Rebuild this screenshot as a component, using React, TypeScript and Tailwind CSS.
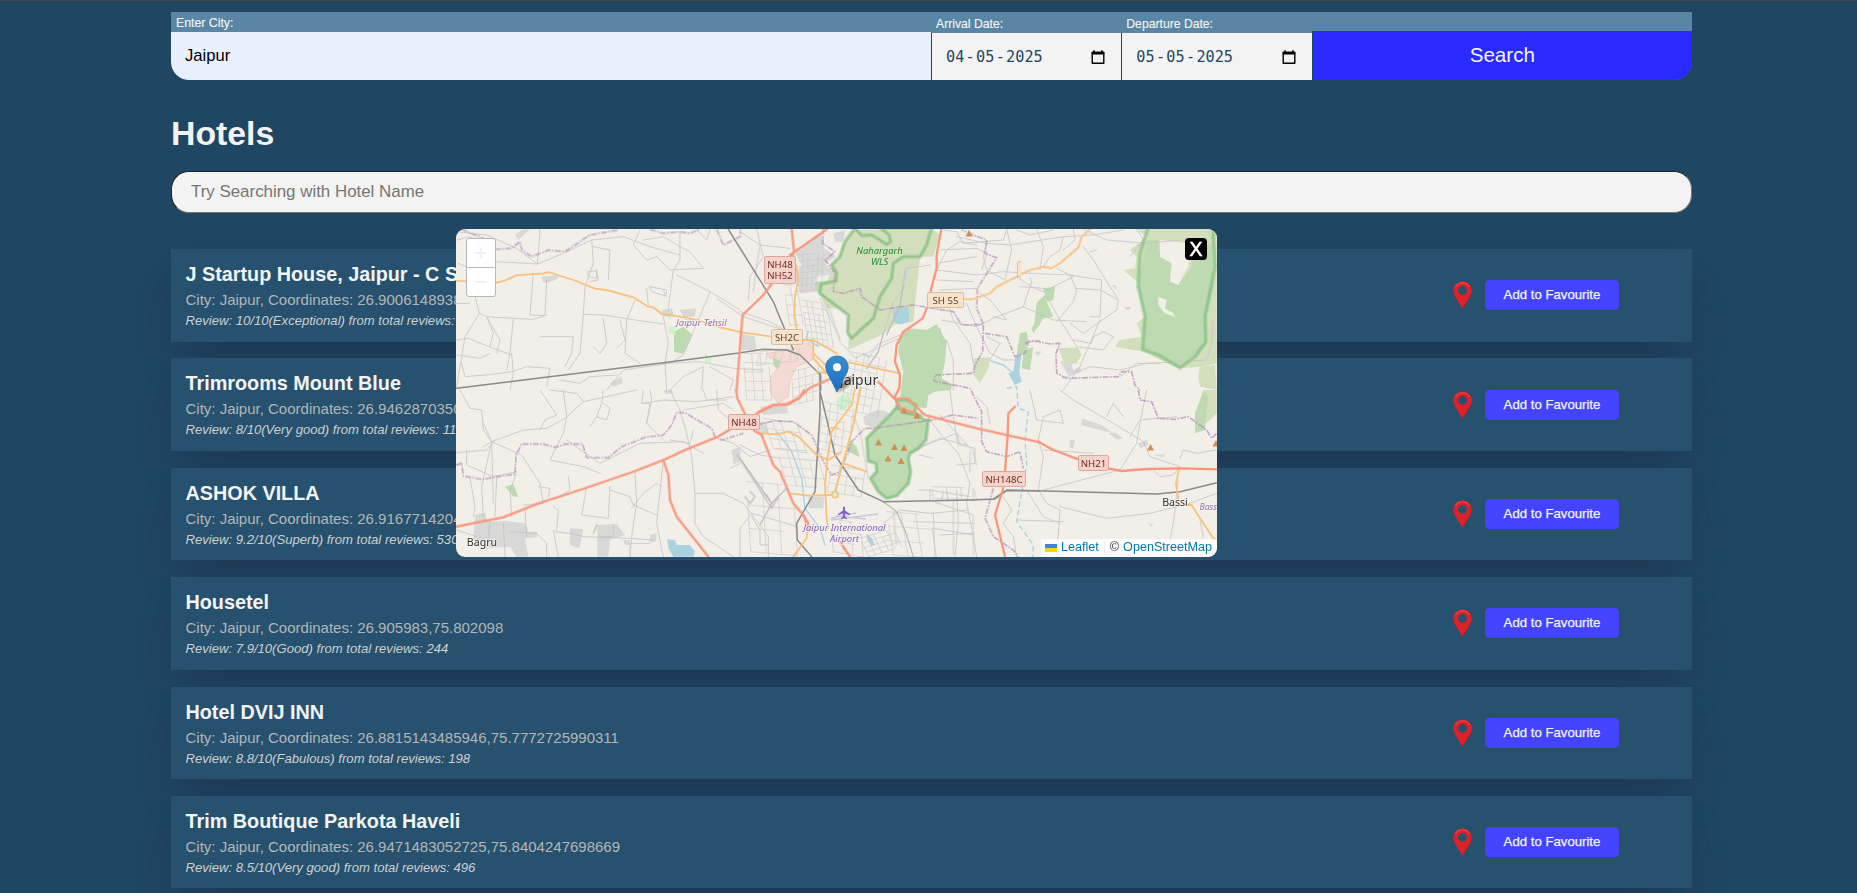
import React from "react";

type Frame = "A" | "B" | "C" | "D" | "E";
type Seg = [Frame, string];

/* Map geometry is kept in five survey sheets at 3x scale, each with its own origin. */
const SHEETS: Record<Frame, string> = {
  A: "translate(-6 -9) scale(.33333)",
  B: "translate(-6 161) scale(.33333)",
  C: "translate(374 -9) scale(.33333)",
  D: "translate(374 161) scale(.33333)",
  E: "translate(284 -4) scale(.33333)",
};

const grid = (x: number, y: number, w: number, h: number, nx: number, ny: number, skew = 0, drop = 0) => {
  let d = "";
  for (let i = 0; i <= nx; i++) {
    const px = x + (w * i) / nx;
    const cut = (i * 37) % 3 === 0 ? h * 0.3 : 0;
    d += `M${px + skew * (cut / h)} ${y + cut + (drop * i) / nx}L${px + skew} ${y + h + (drop * i) / nx}`;
  }
  for (let j = 0; j <= ny; j++) {
    const py = y + (h * j) / ny;
    const s = (skew * j) / ny;
    const cut = (j * 29) % 2 === 0 ? w * 0.25 : 0;
    d += `M${x + s} ${py}L${x + w + s - cut} ${py + drop * (1 - cut / w)}`;
  }
  return d;
};

const GRAY: Seg[] = [
  ["E", "M165 85L235 25L250 35L252 70L288 95L255 115L285 150L235 152L225 170L230 200L180 205L165 150L185 120Z"],
  ["E", "M280 25L315 15L310 50L285 50ZM0 325L45 335L50 375L0 375ZM370 575L410 555L425 555L450 565L405 610L375 600ZM205 815L252 815L250 850L207 850ZM60 545L140 540L145 565L70 570Z"],
  ["A", "M635 270L665 265L672 285L637 290ZM690 270L738 265L735 290L700 290ZM275 170L325 165L320 178L290 190L278 185ZM875 345L915 350L912 390L878 388ZM195 45L215 30L240 28L205 60ZM480 490L515 470L518 490L490 500Z"],
  ["B", "M75 375L105 368L112 395L165 392L225 400L235 425L260 425L262 440L225 445L235 500L200 500L180 470L90 475L70 450ZM360 415L400 418L388 475L360 465ZM442 405L500 402L525 435L480 450L475 500L442 500ZM845 180L872 170L870 215L850 222ZM915 95L950 95L955 130L920 130ZM520 450L540 450L540 465L525 465ZM600 435L620 430L618 455L600 455ZM640 0L665 0L670 10L645 12Z"],
  ["D", "M755 85L815 105L850 130L790 115L755 105ZM720 150L735 150L730 175L718 172ZM925 160L950 150L955 165L930 175ZM975 195L1005 192L1000 202ZM835 130L855 128L880 145L860 148ZM955 400L970 402L962 412Z"],
  ["C", "M1140 310L1155 300L1160 330L1145 335ZM880 262L905 260L895 272ZM615 395L635 395L622 408ZM690 425L720 420L730 450L750 440L755 455L715 465ZM845 195L860 198L858 208Z"],
];

const PALE: Seg[] = [
  ["E", "M240 210L300 90L310 60L345 15L580 12L600 30L580 95L540 95L520 290L460 300L435 325L325 375L330 250L260 250Z"],
  ["C", "M920 28L1160 28L1160 430L1120 440L1045 445L940 395L855 380L870 360L935 350L920 310L945 290L940 200L880 150L915 145L920 110L900 90L950 50ZM685 385L745 382L755 405L740 430L705 435ZM430 415L480 412L475 445L450 490L430 465ZM1110 440L1155 435L1160 510L1110 500L1105 470Z"],
  ["D", "M1120 0L1160 0L1160 70L1130 100L1110 60Z"],
];

const GREEN: Seg[] = [
  ["E", "M480 330L510 310L560 315L590 298L620 350L615 410L605 460L640 480L630 495L585 500L565 510L560 550L520 545L480 520L490 440L475 380Z"],
  ["E", "M225 170L290 165L245 185L250 215L225 195ZM840 325L860 320L865 345L855 375L880 365L870 435L845 430L850 385L830 390ZM890 235L900 230L900 300L880 320ZM330 645L350 665L355 680L340 688L320 665ZM320 665L345 680L355 680L360 697L325 680ZM100 400L120 405L118 440L100 420Z"],
  ["A", "M672 335L700 320L728 345L700 402L672 395Z"],
  ["B", "M165 290L190 282L205 320L190 320Z"],
  ["C", "M950 60L985 60L985 90L1030 120L1020 160L1040 195L1080 150L1100 90L1145 70L1150 200L1125 300L1130 370L1090 410L1045 440L985 405L940 385L945 290L925 200ZM620 248L645 225L640 205L675 200L670 240L650 245L670 290L640 295L610 340L605 325L630 285Z"],
  ["D", "M1120 0L1135 20L1130 60L1125 120L1095 130L1095 70L1110 30ZM225 30L260 45L300 0L235 0Z"],
];

const WATER: Seg[] = [
  ["E", "M460 255L505 245L508 290L482 298L460 290Z"],
  ["E", "M835 385L845 382L838 440L845 470L825 480L805 445L820 440L825 400Z"],
  ["B", "M652 448L675 450L680 465L720 465L735 485L730 500L670 500L655 475Z"],
  ["D", "M110 430L125 445L135 465L125 468L112 450Z"],
];

const PARK: Seg[] = [
  ["E", "M290 520L325 505L335 535L305 560L290 545ZM275 795L295 797L298 815L280 820Z"],
  ["A", "M655 320L675 318L675 345L658 340ZM650 290L660 285L665 300ZM765 400L785 415L782 430L765 425Z"],
];

const PINK: Seg[] = [
  ["E", "M80 385L150 375L190 350L218 365L215 405L170 425L150 465L145 515L115 535L90 500L92 455L120 420L118 400L90 400Z"],
];

const MINOR: Seg[] = [
  ["A", "M20 35L110 45L200 85L262 132M140 125L262 132L270 40L268 28M262 132L340 100L425 60L520 50L600 80L690 105M20 60L60 50L130 95M75 230L88 280L45 350L20 500M88 280L110 290L190 295L250 298L290 285M110 290L130 340L120 380M110 290L150 360L140 400M190 295L180 400L170 450"],
  ["A", "M250 160L240 285L285 287L290 180M425 60L430 130L405 200L400 285L390 400L355 450M430 80L480 90L475 180M400 283L460 285L555 300L640 312M555 240L530 300L525 400L570 430M640 290L655 370L645 430L650 510M20 360L55 355L130 385L185 405M20 405L90 415L120 400M35 430L45 470L110 465L185 455L230 440L300 445L290 500M185 400L190 460L180 510"],
  ["A", "M270 350L370 350L365 400L345 440M460 295L470 370L450 400L430 380M510 300L525 360L500 385M590 205L595 255L630 275M600 200L650 210L647 228L605 215ZM640 210L648 230M570 30L550 75L590 120L620 110L660 150L760 145L720 95L690 80L640 50L580 60M690 35L690 120L670 150L655 265M680 165L780 215L745 300L700 405L660 430L520 450L470 510M780 215L830 245L870 270M920 28L940 110L900 170L895 240M740 28L770 60L780 28M25 130L50 140L70 110M415 155L440 152L440 175L415 170Z"],
  ["A", "M640 430L750 425L850 445L940 450M660 510L700 470L760 440L755 510M780 440L850 480L840 510M800 235L880 290L1000 330M20 250L60 250M420 185L445 180L440 150M330 480L390 490L420 470L500 465"],
  ["B", "M30 0L60 55L95 60L100 120L125 155M125 155L220 120L290 115L345 85L400 35L560 0M125 155L95 290L100 380M125 155L215 195L270 280L280 340L220 345M125 155L130 340M20 188L110 180L135 150M340 0L350 80L340 130L300 210L400 230L450 250M400 35L380 10L300 0M460 0L455 40L440 80L420 110M440 80L470 90L480 55L460 40"],
  ["B", "M270 0L320 75L285 90L270 120M350 150L450 220L570 160L700 155L760 190M580 0L575 40L600 40L590 100L640 150M580 40L640 30L740 35L850 20M50 180L50 225L130 260L200 245M60 265L75 350L70 380M140 265L135 380M200 250L180 300L185 380M355 260L360 300L330 320M410 290L395 375L475 385L480 290M480 300L540 320L550 345L620 375M555 245L560 340L545 440L540 500"],
  ["B", "M640 210L625 350L620 400L640 500M545 355L580 310L620 280L635 290M660 0L690 60L710 130L725 200L735 310L735 400L760 440L820 480L850 500M735 310L820 310L880 340L955 440L955 500M320 420L325 360L310 350M225 360L230 440M310 420L325 500M20 420L80 440M315 425L360 430L400 440L540 445L610 450M870 500L870 415L905 370L1010 400L1040 410M905 380L930 420L930 465L955 465M840 235L870 220M265 290L300 295L295 320"],
  ["B", "M600 0L605 30L590 100M700 60L820 40L850 60M760 0L770 30L830 30M820 150L850 160L900 200L960 180M660 150L720 160L730 120M180 425L260 430L290 460L290 500M120 395L110 480M160 400L165 500M490 405L490 440L450 440M540 500L540 460L600 460M800 0L805 60L850 100M100 100L125 155L100 170"],
  ["C", "M380 50L470 70L540 75L700 50L790 45L880 30M470 70L460 110L470 150L525 180L545 90L530 28M320 150L350 90L390 65L440 75M320 150L440 165L520 155L600 160L720 165L815 180M320 180L430 185M450 220L480 240L530 300L490 290M600 170L605 185L580 260L490 295L440 320L335 300M570 200L640 205M580 260L670 300L770 305M720 165L740 210L730 245L680 305M815 180L810 290L780 290"],
  ["C", "M760 80L790 120L865 240L860 270L760 340L720 310M735 205L810 210L865 240M560 170L605 200L640 215L730 170L680 145M780 95L800 90M650 230L690 300L740 380L820 390L850 350L820 335L790 350L785 370L730 360M810 300L780 370L750 440L700 510M470 350L510 370L480 420M330 325L335 370L350 360L370 420L370 510M700 475L780 440L870 450L950 430L1060 425L1130 420L1145 370L1150 300M620 28L640 80L630 150M730 28L735 60L700 90M870 470L920 430L990 430M920 28L940 60L900 110"],
  ["C", "M340 30L380 35L400 70L520 60L530 28M330 90L440 85L470 100L455 150M560 30L600 45L670 30M700 50L690 90L660 110L640 140M440 110L320 130M330 210L440 205M350 240L370 300L420 370L430 430M440 320L480 400L520 420L560 420M410 250L440 320M760 28L830 60L950 70L1050 60"],
  ["D", "M290 75L330 130L385 190L420 280L410 340L430 440L440 500M160 400L210 360L300 370L415 360M310 370L315 500M240 190L300 160L380 130L390 165L435 175L435 220L380 225M360 0L370 80L385 170M265 300L300 300L420 320M300 300L300 330M250 395L430 400M330 435L430 430M350 305L355 330M340 305L335 330M380 300L385 400L375 500M520 320L545 360L520 400L550 440L560 500"],
  ["D", "M600 0L620 90L700 100L690 60L640 80L625 150L640 200L625 300L650 340L690 360L680 500M690 350L830 385L960 370L1080 340L1160 310M730 30L690 0M730 30L850 100L940 155L960 200L1050 230M950 0L930 100L920 160L870 240L640 300M900 140L930 90L1040 80M1050 205L1060 180L1100 190L1160 180M1080 500L1120 440L1110 390M560 390L700 395M1045 270L1030 400L1010 500M590 300L640 380L690 400M640 180L790 190M480 100L470 50L440 20M830 80L850 40L880 80M970 240L990 260L1030 255L1050 230"],
  ["E", "M265 240L300 350L345 400L500 330M430 325L460 230L490 190L500 130L570 120M380 410L410 360L480 330M240 220L300 340M0 20L60 60L150 70M60 60L50 120L40 200M0 260L90 290L160 330M480 690L600 640L680 660M540 690L580 700M600 570L700 680L710 720M690 680L690 740M460 860L470 960M580 830L700 870L700 990M580 910L700 930M640 830L640 990M700 790L700 830M400 770L440 740L480 700M340 570L360 620L385 760M0 660L60 690L120 700"],
];

const STREETS: Seg[] = [
  ["E", grid(10, 385, 75, 140, 3, 5, 10)],
  ["E", grid(175, 90, 75, 110, 5, 6, -6, -8)],
  ["E", grid(185, 225, 75, 130, 5, 7, 20, 12)],
  ["E", grid(330, 380, 110, 170, 5, 7, -28, 24)],
  ["E", grid(155, 440, 80, 100, 4, 4, 5, -20)],
  ["E", grid(250, 530, 90, 140, 4, 6, -15, 22)],
  ["E", grid(70, 580, 100, 90, 4, 3, 30, 14)],
  ["E", grid(110, 670, 120, 110, 4, 4, 30, 10)],
  ["E", grid(275, 720, 100, 80, 4, 3, -12, 16)],
  ["E", grid(360, 940, 100, 55, 5, 4, 26, -30)],
  ["E", grid(440, 860, 130, 130, 3, 3, 20, 10)],
  ["E", grid(20, 770, 140, 210, 3, 3, 12, 12)],
  ["E", grid(130, 180, 40, 120, 2, 4, 20)],
  ["E", grid(60, 380, 120, 40, 5, 1, -10, -12)],
  ["E", grid(575, 785, 130, 35, 3, 1, 4, 4)],
  ["E", grid(270, 880, 90, 100, 3, 3, 10, 16)],
];

const MIDGRAY: Seg[] = [
  ["E", "M430 830L470 860L500 930L520 995M0 700L95 835M95 835L60 900M140 790L95 835L80 810M430 325L415 380L380 430M490 180L480 240L440 330"],
  ["B", "M862 195L965 355L985 320M900 305L915 320L900 340L885 320M440 405L430 430"],
];

const RAIL: Seg[] = [
  ["A", "M835 28L970 245L1030 390M20 505L360 463L640 428L860 400L940 388L1010 390L1050 405L1112 465L1112 510"],
  ["E", "M240 445L240 560L225 800L170 895L172 945L215 995M240 500L262 590L285 690L355 795L430 830L690 825L765 822L800 797L900 797"],
  ["D", "M490 327L530 300L620 302L980 312L1050 305L1160 278"],
];

const BOUNDARY: Seg[] = [
  ["A", "M35 28L100 55M135 88L185 85L210 65L215 90L245 110L295 90L345 95L375 75L385 68L420 45L505 30M600 28L640 40L690 35L720 40L750 28M800 28L820 75L870 50L872 28"],
  ["B", "M18 225L35 220L40 258L95 268L195 252L198 195L215 162L280 162L315 172L345 162L398 162L410 203L475 203L515 170L585 142L640 135L665 105L680 68L705 68L785 115L795 140L815 150L880 130"],
  ["E", "M250 12L248 55L285 80L255 105L285 145L280 200L310 205L360 190L365 215L420 255L520 240L640 260L665 300L730 298L710 250L712 190L770 98L735 85L740 45L700 30L665 14"],
  ["E", "M735 325L800 335L825 395L855 385L865 350L900 348M730 300L728 380L705 420L700 445L585 450L582 468L690 490L725 560L725 650L740 680L800 695L840 680L850 730"],
  ["E", "M50 600L100 588L160 590L215 630L255 720L275 750L300 740L335 650L375 610L400 610L580 585L640 570L715 580M760 790L735 880L760 935L820 975L835 995"],
  ["C", "M585 370L610 362L660 372L690 370L678 400L680 460L710 475L865 470L875 455L905 455L915 495L930 510"],
  ["D", "M925 0L930 30L965 35L985 85L1035 88L1075 80L1130 120L1145 145L1160 130"],
];

const CREEK: Seg[] = [
  ["E", "M800 490L830 485L835 550L865 560L855 640L860 720L840 830L830 890L880 960L878 995"],
];
const STREAM: Seg[] = [
  ["E", "M110 620L155 680L185 760L195 850L240 910L255 960M205 320L198 340L235 365M495 135L490 170M370 385L385 395M750 407L790 420L820 445"],
];

const ORANGE: Seg[] = [
  ["A", "M20 182L50 184M138 188L165 182L198 166L280 160L295 156L370 180L435 206L470 210L550 232L595 260L610 262L635 282L690 290L740 300L810 322L880 338L965 350"],
  ["A", "M1030 100L1045 175L1035 230L1033 290L1042 335"],
  ["E", "M185 345L220 345L290 385M325 412L480 445M220 345L220 400L255 440M220 385L262 425M345 490L335 540L275 620L262 700L255 780L260 880L265 910M362 490L340 600L285 800M65 625L110 628L145 620L175 635L230 690L265 705L305 680M310 715L380 740M150 805L205 812L275 810M205 895L200 940L160 995M268 608L295 610M230 440L262 445"],
  ["C", "M400 237L425 238L480 220L500 200L560 170L600 150L640 140L665 145L690 130L745 82L755 50L780 28"],
  ["D", "M1048 235L1038 280L1045 325M1060 345L1085 345L1110 385L1150 445L1160 450"],
];

const TRUNK: Seg[] = [
  ["A", "M1025 28L1032 95L1025 108M1130 28L1020 105M965 192L940 225L878 285L872 350L860 510"],
  ["B", "M18 410L160 382L260 342L410 293L550 245L640 210L710 178L800 142L840 118M640 210L655 255L660 330L680 380L775 500M858 0L862 25L885 72M918 72L970 45L1015 43L1050 22L1062 0M912 122L935 135L970 225L990 245L1030 340L1062 378L1075 420"],
  ["E", "M55 562L100 540L140 537L175 520L210 488L275 460M415 470L462 520L505 522L555 570L710 610L800 630L900 652M465 520L480 550L530 565M604 12L590 90L590 130L575 185L572 200M560 250L548 280L520 300L490 320L470 360L465 410L480 450L478 490L462 520M825 545L805 565L803 630L795 740M790 788L765 870L795 995M205 895L190 870M300 950L330 995"],
  ["D", "M625 155L670 180L745 208M835 235L875 243L950 237L1060 235L1160 238"],
];

const Layer = ({ items, fill = "none", stroke, w, dash, o }: { items: Seg[]; fill?: string; stroke?: string; w?: number; dash?: string; o?: number }) => (
  <g fill={fill} stroke={stroke} strokeWidth={w} strokeDasharray={dash} opacity={o} strokeLinejoin="round" strokeLinecap={dash ? "butt" : "round"}>
    {items.map(([f, d], i) => (
      <path key={i} transform={SHEETS[f]} d={d} />
    ))}
  </g>
);

/* Protected area outline: a wide soft band with a thin darker edge on top. */
const Reserve = ({ sheet, d, fill = "none" }: { sheet: Frame; d: string; fill?: string }) => (
  <g transform={SHEETS[sheet]} strokeLinejoin="round" stroke="#7dbd7c">
    <path d={d} fill={fill} strokeWidth="12" strokeOpacity=".45" />
    <path d={d} fill="none" strokeWidth="4" strokeOpacity=".6" />
  </g>
);

const Shield = ({ x, y, w, h = 16, lines, tone = "red" }: { x: number; y: number; w: number; h?: number; lines: string[]; tone?: string }) => (
  <g>
    <rect x={x + 0.5} y={y + 0.5} width={w - 1} height={h - 1} rx="1.5" fill={tone === "red" ? "#f5d3cb" : "#f7e3cc"} stroke={tone === "red" ? "#dfa79c" : "#d9bf9b"} />
    {lines.map((l, i) => (
      <text key={l} x={x + w / 2} y={y + 12 + i * 11.4} textAnchor="middle" fontSize="9.6" fill={tone === "red" ? "#6d2d21" : "#5c4326"}>{l}</text>
    ))}
  </g>
);

const PEAKS = [[513, 4.5], [448, 181.5], [461, 186.5], [422.5, 213.5], [438.5, 218], [448, 219], [432, 229.5], [445, 232], [694.5, 218.5], [760, 214.5]];

const MapCanvas = () => (
  <svg width="761" height="328" viewBox="0 0 761 328" className="block font-['Noto_Sans',sans-serif]">
    <rect width="761" height="328" fill="#f2efe9" />
    <Layer items={GRAY} fill="#d8d8d7" />
    <Layer items={PALE} fill="#d3dfbc" />
    <Layer items={GREEN} fill="#bddab1" />
    <Layer items={PARK} fill="#cdf3cd" />
    <Layer items={PINK} fill="#f4dad2" stroke="#f0bdb5" w={2} />
    <Layer items={WATER} fill="#aad3df" />
    <path transform={SHEETS.C} d="M990 60L1080 70L1075 140L1045 195L1020 185L1025 130L990 110ZM985 230L1010 240L1005 265L1030 280L1035 290L1005 280L985 255Z" fill="#f2efe9" />
    <Layer items={MINOR} stroke="#c3c3c8" w={2.8} o={0.85} />
    <Layer items={STREETS} stroke="#c9c9cd" w={2.4} o={0.8} />
    <Layer items={MIDGRAY} stroke="#bdbdc0" w={4} />
    <Reserve
      sheet="E"
      fill="#d3dfbc"
      d="M345 10L315 50L300 95L275 120L290 145L288 168L243 178L240 205L325 270L323 322L335 340L400 280L420 215L455 160L460 115L490 95L540 95L560 60L575 8L420 8L448 30L452 50L440 58L395 30L365 32Z"
    />
    <Reserve
      sheet="E"
      fill="#bddab1"
      d="M475 540L505 565L540 570L550 585L565 585L558 645L535 670L510 685L505 700L512 740L505 775L470 812L440 820L415 800L392 760L410 740L408 715L385 708L380 640L410 610L450 570Z"
    />
    <Reserve sheet="E" fill="#bddab1" d="M470 525L500 524L528 540L525 560L500 565L475 550Z" />
    <Reserve sheet="C" d="M955 20L930 100L925 200L945 290L938 388L985 405L1050 443L1095 410L1128 365L1125 290L1155 140L1148 20" />
    <Layer items={STREAM} stroke="#a9d4e0" w={4} />
    <Layer items={CREEK} stroke="#a3d3e2" w={4} dash="16 9" />
    <Layer items={BOUNDARY} stroke="#b493b8" w={5} dash="18 4 5 4" o={0.75} />
    <Layer items={RAIL} stroke="#8b8b8a" w={4.5} />
    <Layer items={ORANGE} stroke="#f8c27c" w={5.5} />
    <Layer items={TRUNK} stroke="#f9977d" w={7} />
    <circle cx="379" cy="265.7" r="3" fill="#d8f0d0" stroke="#f8c27c" strokeWidth="1.5" />
    <path d="M375 291L422 285M380 287L410 290M376 289L400 284" stroke="#c9c8d8" strokeWidth="1.6" />
    <rect x="561.5" y="32.5" width="4" height="15" fill="#f7e3cc" />
    <path d="M565 32.5H562.5Q561.5 32.5 561.5 34V47.5H565" fill="none" stroke="#d9bf9b" />
    {PEAKS.map(([x, y]) => (
      <path key={`${x}-${y}`} d={`M${x} ${y - 3.5}L${x + 3.5} ${y + 3}H${x - 3.5}Z`} fill="#d08f55" />
    ))}
    <path d="M388 277.5C389 277.5 389 279 389 280V281.5L394 285V286.2L389 284.5V287.5L391 289V290L388 289.2L385 290V289L387 287.5V284.5L382 286.2V285L387 281.5V280C387 279 387 277.5 388 277.5Z" fill="#8461c4" />
    <Shield x={308} y={27} w={32} h={28} lines={["NH48", "NH52"]} />
    <Shield x={315} y={100} w={32} lines={["SH2C"]} tone="tan" />
    <Shield x={471} y={63} w={37} lines={["SH 55"]} tone="tan" />
    <Shield x={272} y={185} w={32} lines={["NH48"]} />
    <Shield x={526} y={242} w={44} lines={["NH148C"]} />
    <Shield x={622} y={226} w={31} lines={["NH21"]} />
    <g textAnchor="middle" stroke="#f6f3ee" strokeWidth="2" strokeOpacity=".75" strokeLinejoin="round" paintOrder="stroke">
      <g fontStyle="italic" fontSize="9.4">
        <text x="245.5" y="97" fill="#9470a5">Jaipur Tehsil</text>
        <text x="423.5" y="24.6" fill="#228a32" stroke="#d3dfbc">Nahargarh</text>
        <text x="423.5" y="35.8" fill="#228a32" stroke="#d3dfbc">WLS</text>
        <text x="388.5" y="301.5" fill="#7d5ab8">Jaipur International</text>
        <text x="388.5" y="312.7" fill="#7d5ab8">Airport</text>
        <text x="743.5" y="280.6" fontSize="8.6" textAnchor="start" fill="#9470a5">Bass</text>
      </g>
      <text x="403" y="156" fontSize="14" fill="#333">Jaipur</text>
      <text x="26" y="317" fontSize="10.6" fill="#333">Bagru</text>
      <text x="719" y="276.6" fontSize="10.6" fill="#333">Bassi</text>
    </g>
    <defs>
      <linearGradient id="pin" x1="0" x2="0" y1="0" y2="1">
        <stop offset="0" stopColor="#3d8dcb" />
        <stop offset="1" stopColor="#126fc6" />
      </linearGradient>
      <radialGradient id="shade">
        <stop offset="0" stopColor="#000" stopOpacity=".5" />
        <stop offset="1" stopColor="#000" stopOpacity="0" />
      </radialGradient>
    </defs>
    <ellipse cx="389" cy="155" rx="14" ry="5.5" transform="rotate(-42 389 155)" fill="url(#shade)" />
    <path d="M381 127C374.5 127 369.8 131.8 369.800 138C369.8 142 371.5 144.5 373.5 148L381 163L388.5 148C390.5 144.5 392.2 142 392.2 138C392.2 131.8 387.5 127 381 127Z" fill="url(#pin)" stroke="#2d74ab" strokeWidth=".8" />
    <circle cx="381" cy="138.3" r="4" fill="#fff" />
  </svg>
);

const PinIcon = () => (
  <svg width="20" height="28" viewBox="0 0 20 28" className="block">
    <path fillRule="evenodd" fill="#de2027" d="M10.5 .5C5.300 .5 1.200 4.400 1.200 9.500C1.200 12.300 2.600 14.800 4.200 17.500L10.500 27.800L16.800 17.500C18.400 14.800 19.800 12.300 19.800 9.500C19.800 4.400 15.700 .5 10.500 .5ZM10.500 4.900A4.400 4.400 0 1 1 10.500 13.700A4.400 4.400 0 1 1 10.500 4.900Z" />
    <path d="M3.500 6C5 3 7.500 1.900 10.500 1.900S16 3 17.500 6" fill="none" stroke="#f0555a" strokeWidth=".9" />
    <path d="M19 12.500C17.500 17 14 20 10.500 27.500L16.800 17.500C17.800 15.800 18.600 14.200 19 12.500Z" fill="#b3191f" />
  </svg>
);

const CalendarIcon = () => (
  <svg width="14" height="15" viewBox="0 0 14 15" className="block">
    <path d="M1.2 2.5H12.8V13.3H1.2Z" fill="none" stroke="#000" strokeWidth="1.4" strokeLinejoin="round" />
    <path d="M.8 1.8H13.2V4.6H.8ZM2.3 .2H3.8V2H2.3ZM10.2 .2H11.7V2H10.2Z" fill="#000" />
  </svg>
);

const DateField = ({ label, parts }: { label: string; parts: string[] }) => (
  <div className="flex w-[190.3px] flex-col">
    <label className="h-[21px] pl-[5px] pt-px text-[12.2px] leading-[22px] text-[#f3f3f3] [-webkit-text-stroke:0.15px]">{label}</label>
    <div className="flex h-[47px] items-center justify-between border-l border-[#1f4662] bg-[#f3f3f3] pl-[13px] pr-4 pt-px font-['DejaVu_Sans_Mono',monospace] text-[15.2px] text-[#1f4662]">
      <span className="flex">
        <span className="px-px">{parts[0]}</span>
        <span className="px-[0.3px]">-</span>
        <span className="px-px">{parts[1]}</span>
        <span className="px-[0.3px]">-</span>
        <span className="px-px">{parts[2]}</span>
      </span>
      <CalendarIcon />
    </div>
  </div>
);

const HOTELS = [
  { name: "J Startup House, Jaipur - C Scheme", at: "26.9006148938,75.7952", review: "10/10(Exceptional) from total reviews: 2" },
  { name: "Trimrooms Mount Blue", at: "26.9462870350,75.8412", review: "8/10(Very good) from total reviews: 11" },
  { name: "ASHOK VILLA", at: "26.9167714204,75.7867", review: "9.2/10(Superb) from total reviews: 530" },
  { name: "Housetel", at: "26.905983,75.802098", review: "7.9/10(Good) from total reviews: 244" },
  { name: "Hotel DVIJ INN", at: "26.8815143485946,75.7772725990311", review: "8.8/10(Fabulous) from total reviews: 198" },
  { name: "Trim Boutique Parkota Haveli", at: "26.9471483052725,75.8404247698669", review: "8.5/10(Very good) from total reviews: 496" },
];

const HotelCard = ({ name, at, review }: (typeof HOTELS)[number]) => (
  <article className="flex h-[92.5px] shrink-0 items-center bg-[#26526f] pl-[14.5px] pr-[73px] shadow-[0_27px_50px_-14px_rgba(50,50,93,0.25),0_18px_36px_-18px_rgba(0,0,0,0.28)]">
    <div className="flex h-full flex-1 flex-col pt-[13px]">
      <h2 className="text-[19.8px] font-bold leading-[25px] text-[#f3f3f3]">{name}</h2>
      <p className="pt-px text-[15px] leading-[24px] text-[#b5b5b5]">City: Jaipur, Coordinates: {at}</p>
      <p className="text-[13.1px] italic leading-[17px] text-[#cfcfcf]">Review: {review}</p>
    </div>
    <PinIcon />
    <button className="ml-[13px] h-[30px] w-[134px] rounded-[4.5px] bg-[#4444ff] text-[13.2px] leading-[30px] text-[#f3f3f3] [-webkit-text-stroke:0.25px]">Add to Favourite</button>
  </article>
);

export default function App() {
  return (
    <div className="relative h-screen overflow-hidden border-t border-[#444648] bg-[#1f4662] font-['Liberation_Sans',Arial,sans-serif]">
      <main className="ml-[171px] flex w-[1521px] flex-col pt-[11px]">
        <form className="flex h-[68px] overflow-hidden rounded-b-[18px] bg-[#5986a5]">
          <div className="flex w-[760px] flex-col">
            <label className="h-5 pl-[5px] text-[12.3px] leading-[22px] text-[#f3f3f3] [-webkit-text-stroke:0.15px]">Enter City:</label>
            <div className="h-12 rounded-bl-[18px] bg-[#e8f0fe] pl-[14px] text-[16.6px] leading-[47px] text-black">Jaipur</div>
          </div>
          <DateField label="Arrival Date:" parts={["04", "05", "2025"]} />
          <DateField label="Departure Date:" parts={["05", "05", "2025"]} />
          <div className="flex flex-1 flex-col pt-[19px]">
            <button type="button" className="h-[49px] border-l border-[#1f4662] bg-[#2a2aff] text-[20.6px] text-[#f3f3f3]">Search</button>
          </div>
        </form>

        <h1 className="mt-[33px] text-[33.8px] font-bold leading-[40px] text-[#f3f3f3]">Hotels</h1>
        <div className="mt-[18px] h-[42px] rounded-[18px] border border-b-[#767676] border-l-[#1c2126] border-r-[#767676] border-t-[#1c2126] bg-[#f3f3f3] pl-[19px] text-[16.9px] leading-[39px] text-[#757575]">
          Try Searching with Hotel Name
        </div>

        <section className="mt-9 flex flex-col gap-[16.9px]">
          {HOTELS.map((h) => (
            <HotelCard key={h.name} {...h} />
          ))}
        </section>
      </main>

      <div className="absolute left-[456px] top-[228px] h-[328px] w-[761px] overflow-hidden rounded-[9px]">
        <MapCanvas />
        <div className="absolute left-[10px] top-[9px] flex w-[30px] flex-col overflow-hidden rounded-[3px] border border-[#b9b7b3] bg-white">
          <span className="flex h-[28.5px] items-center justify-center border-b border-[#bcbcbc]">
            <svg width="12" height="12" viewBox="0 0 12 12"><path d="M6 .5V11.500M.5 6H11.5" stroke="#f1f1f1" strokeWidth="2.2" /></svg>
          </span>
          <span className="flex h-[28px] items-center justify-center">
            <svg width="12" height="12" viewBox="0 0 12 12"><path d="M0 6H12" stroke="#f1f1f1" strokeWidth="2" /></svg>
          </span>
        </div>
        <button className="absolute right-[10px] top-[9px] h-[22px] w-[22px] rounded-[4px] bg-black text-center text-[19.5px] leading-[21px] text-white [-webkit-text-stroke:0.6px]">X</button>
        <div className="absolute bottom-0 right-0 flex h-[18px] w-[176px] items-center bg-white/80 pb-px pl-1 text-[12.6px] text-[#0078a8]">
          <svg width="12" height="8" viewBox="0 0 12 8" className="mr-1">
            <path fill="#4c7be1" d="M0 0h12v4H0z" />
            <path fill="#ffd500" d="M0 4h12v4H0z" />
          </svg>
          <span>Leaflet</span>
          <span className="mx-[5px] h-3 w-px bg-[#eeeeee]" />
          <span className="mr-1 text-[#333]">©</span>
          <span>OpenStreetMap</span>
        </div>
      </div>
    </div>
  );
}
